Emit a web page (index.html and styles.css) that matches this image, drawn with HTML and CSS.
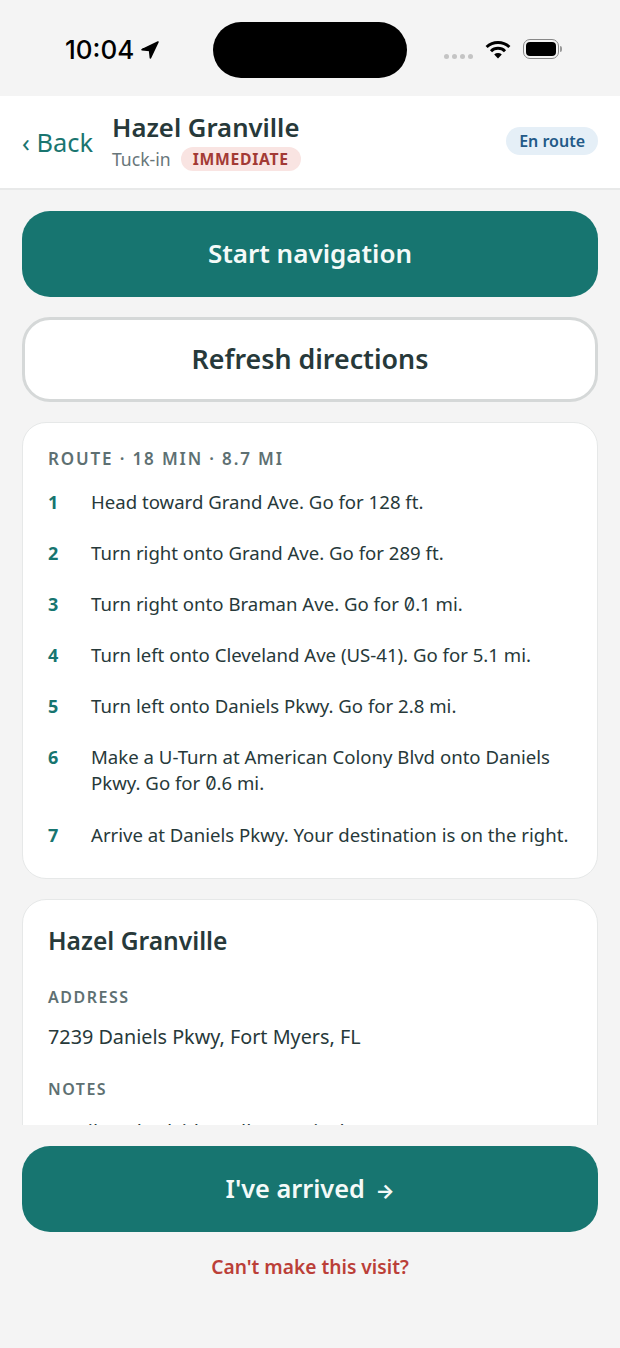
FILE: index.html
```html
<!DOCTYPE html>
<html lang="en">
<head>
  <meta charset="UTF-8">
  <title>Hazel Granville</title>
  <link rel="stylesheet" href="styles.css">
</head>
<body>
  <div class="status-bar">
    <div class="status-time">
      <span>10:04</span>
      <svg class="loc-icon" viewBox="0 0 20 20"><path d="M18 2 L2 9.6 L9.6 10.4 L10.4 18 Z" fill="#000" stroke="#000" stroke-width="1.6" stroke-linejoin="round"/></svg>
    </div>
    <div class="island"></div>
    <div class="status-icons">
      <span class="signal"><i></i><i></i><i></i><i></i></span>
      <svg class="wifi-icon" viewBox="0 0 26 19">
        <path d="M1.6 7 A16.5 16.5 0 0 1 24.4 7" fill="none" stroke="#000" stroke-width="3"/>
        <path d="M6 11.2 A10 10 0 0 1 20 11.2" fill="none" stroke="#000" stroke-width="3"/>
        <path d="M9.2 14.4 L13 18.6 L16.8 14.4 A5.6 5.6 0 0 0 9.2 14.4 Z" fill="#000"/>
      </svg>
      <span class="battery"><i></i></span>
      <span class="battery-cap"></span>
    </div>
  </div>

  <header class="top-bar">
    <a class="back" href="#">‹ Back</a>
    <div class="visit-head">
      <h1>Hazel Granville</h1>
      <div class="visit-sub">
        <span>Tuck-in</span>
        <span class="badge-urgent">IMMEDIATE</span>
      </div>
    </div>
    <span class="badge-status">En route</span>
  </header>

  <main class="scroll-area">
    <button class="btn btn-primary">Start navigation</button>
    <button class="btn btn-outline">Refresh directions</button>

    <section class="card route-card">
      <div class="route-title">ROUTE · 18 MIN · 8.7 MI</div>
      <ol class="steps">
        <li><b>1</b><span>Head toward Grand Ave. Go for 128 ft.</span></li>
        <li><b>2</b><span>Turn right onto Grand Ave. Go for 289 ft.</span></li>
        <li><b>3</b><span>Turn right onto Braman Ave. Go for <span class="zero">0</span>.1 mi.</span></li>
        <li><b>4</b><span>Turn left onto Cleveland Ave (US-41). Go for 5.1 mi.</span></li>
        <li><b>5</b><span>Turn left onto Daniels Pkwy. Go for 2.8 mi.</span></li>
        <li><b>6</b><span>Make a U-Turn at American Colony Blvd onto Daniels Pkwy. Go for <span class="zero">0</span>.6 mi.</span></li>
        <li><b>7</b><span>Arrive at Daniels Pkwy. Your destination is on the right.</span></li>
      </ol>
    </section>

    <section class="card client-card">
      <h2>Hazel Granville</h2>
      <div class="field-label field-first">ADDRESS</div>
      <p class="field-value">7239 Daniels Pkwy, Fort Myers, FL</p>
      <div class="field-label">NOTES</div>
      <p class="field-value field-notes">Family at bedside, call on arrival.</p>
    </section>
  </main>

  <footer class="actions">
    <button class="btn btn-primary btn-arrive">I've arrived <span class="arrow">→</span></button>
    <a class="cancel" href="#">Can't make this visit?</a>
  </footer>
</body>
</html>
```
FILE: styles.css
```css
* {
  box-sizing: border-box;
}
html, body {
  height: 100%;
}
body {
  margin: 0;
  height: 1348px;
  display: flex;
  flex-direction: column;
  overflow: hidden;
  background-color: #f4f4f4;
  color: #27393a;
  font-family: "Noto Sans", "Open Sans", sans-serif;
}

/* status bar */
.status-bar {
  height: 96px;
  flex: none;
  display: flex;
  align-items: flex-start;
  padding-top: 22px;
}
.status-time {
  width: 213px;
  display: flex;
  align-items: center;
  padding: 13px 0 0 65px;
  gap: 6px;
  color: #000;
  font-family: "Inter", sans-serif;
  font-size: 26px;
  font-weight: 500;
  line-height: 30px;
  letter-spacing: 0;
}
.loc-icon {
  width: 20px;
  height: 20px;
}
.island {
  width: 194px;
  height: 56px;
  background-color: #000;
  border-radius: 28px;
}
.status-icons {
  display: flex;
  align-items: center;
  padding: 17px 0 0 37px;
}
.signal {
  display: flex;
  gap: 3px;
  margin-top: 14px;
}
.signal i {
  width: 5px;
  height: 5px;
  border-radius: 50%;
  background-color: #c4c4c4;
}
.wifi-icon {
  width: 26px;
  height: 19px;
  margin-left: 12px;
}
.battery {
  width: 36px;
  height: 20px;
  margin-left: 12px;
  padding: 2px;
  border: 1px solid #888;
  border-radius: 7px;
}
.battery i {
  display: block;
  height: 100%;
  background-color: #000;
  border-radius: 4px;
}
.battery-cap {
  width: 2px;
  height: 6px;
  margin-left: 1px;
  background-color: #999;
  border-radius: 0 2px 2px 0;
}

/* header */
.top-bar {
  height: 94px;
  flex: none;
  display: flex;
  align-items: center;
  padding: 0 22px;
  background-color: #fff;
  border-bottom: 2px solid #e8e9e9;
}
.back {
  color: #1a756f;
  font-size: 25.4px;
  text-decoration: none;
  margin-right: 19px;
}
.visit-head {
  flex: 1;
  margin-top: -1px;
}
h1 {
  margin: 0;
  font-size: 25.7px;
  line-height: 32px;
  font-weight: 600;
}
.visit-sub {
  display: flex;
  align-items: center;
  gap: 10px;
  margin-top: 3px;
  color: #68767a;
  font-size: 17.6px;
}
.badge-urgent {
  padding: 1px 12px;
  border-radius: 13px;
  background-color: #f9e4e2;
  color: #a33a35;
  font-size: 15.7px;
  font-weight: 700;
  letter-spacing: 0.7px;
}
.badge-status {
  margin-top: -2px;
  padding: 3px 13px;
  border-radius: 14px;
  background-color: #e5eff7;
  color: #235a88;
  font-size: 16px;
  font-weight: 600;
}

/* content */
.scroll-area {
  height: 935px;
  flex: none;
  overflow: hidden;
  padding: 21px 22px 0;
}
.btn {
  display: block;
  width: 100%;
  height: 86px;
  padding-bottom: 4px;
  border-radius: 28px;
  font-family: inherit;
  font-size: 26px;
  font-weight: 600;
}
.btn-primary {
  border: 0;
  background-color: #177570;
  color: #f4faf8;
}
.btn-outline {
  height: 85px;
  margin-top: 20px;
  border: 3px solid #d5d8d8;
  background-color: #fff;
  color: #27393a;
  font-size: 26.8px;
}
.btn-arrive {
  font-size: 25.3px;
}
.card {
  margin-top: 20px;
  padding: 24px 25px;
  background-color: #fff;
  border: 1px solid #e6e8e8;
  border-radius: 24px;
}
.route-card {
  padding-right: 20px;
}
.route-title {
  color: #5e7072;
  font-size: 17px;
  font-weight: 600;
  line-height: 24px;
  letter-spacing: 1.85px;
}
.steps {
  margin: 18px 0 0;
  padding: 0;
  list-style: none;
  font-size: 18.6px;
  line-height: 26px;
}
.steps li {
  display: flex;
  margin-bottom: 24.8px;
}
.steps li:last-child {
  margin-bottom: 6.5px;
}
.steps b {
  flex: none;
  width: 43px;
  color: #177570;
  font-size: 18px;
  font-weight: 700;
}
.zero {
  font-family: "Inter", sans-serif;
  font-feature-settings: "zero";
  font-size: 18px;
}
.client-card h2 {
  margin: 0;
  font-size: 24.6px;
  line-height: 34px;
  font-weight: 600;
}
.field-label {
  margin-top: 26px;
  color: #5e7072;
  font-size: 16px;
  font-weight: 600;
  line-height: 24px;
  letter-spacing: 1.5px;
}
.field-first {
  margin-top: 27px;
}
.field-value {
  margin: 14px 0 0;
  font-size: 19.8px;
  line-height: 28px;
}
.field-notes {
  margin-top: 17px;
}

/* bottom actions */
.actions {
  padding: 21px 22px 0;
  text-align: center;
}
.arrow {
  margin-left: 4px;
  font-family: "Inter", sans-serif;
  font-size: 20px;
  font-weight: 700;
}
.cancel {
  display: block;
  margin-top: 21px;
  color: #bb3f38;
  font-size: 19.2px;
  font-weight: 600;
  text-decoration: none;
}
```
